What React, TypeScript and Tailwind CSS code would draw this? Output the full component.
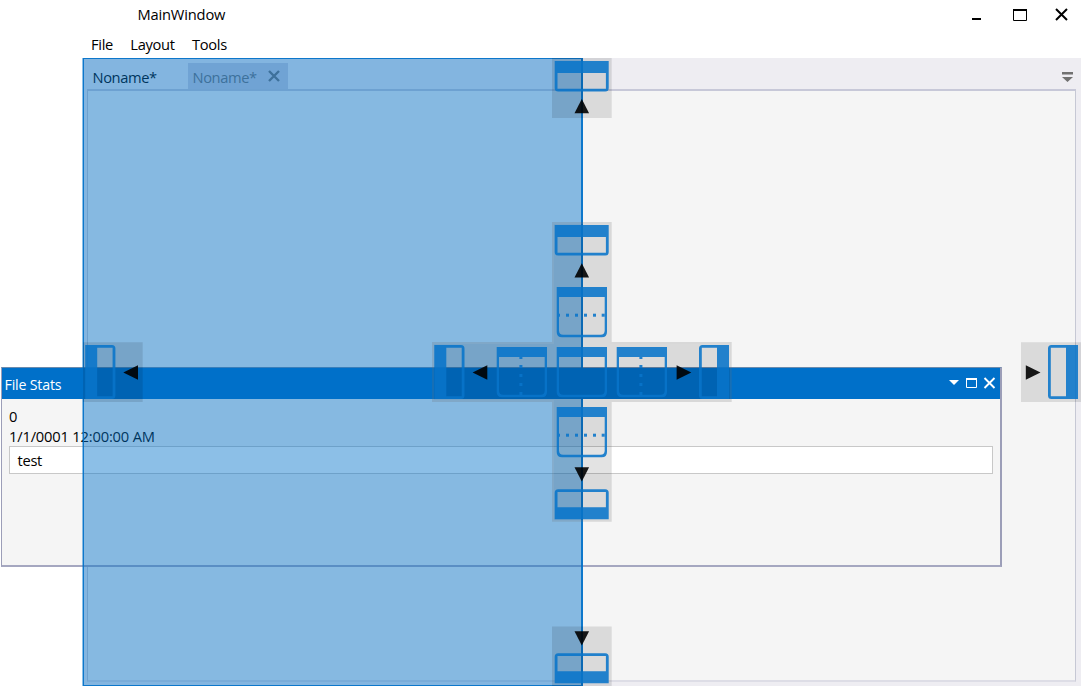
import React from "react";

const BLUE = "#0874ca";

type Side = "top" | "bottom" | "left" | "right";

function EdgeGlyph({ x, y, side }: { x: number; y: number; side: Side }) {
  const frames: Record<Side, string> = {
    top: "M0 0H54V27Q54 30.5 50.5 30.5H3.5Q0 30.5 0 27ZM2.8 12V27.7H51.2V12Z",
    bottom: "M0 30H54V3.5Q54 0 50.5 0H3.5Q0 0 0 3.5ZM2.8 18V2.8H51.2V18Z",
    left: "M0 0H26.7Q30.2 0 30.2 3.5V50.5Q30.2 54 26.7 54H0ZM12 2.8V51.2H27.4V2.8Z",
    right: "M30 0H3.5Q0 0 0 3.5V50.5Q0 54 3.5 54H30ZM18 2.8V51.2H2.8V2.8Z",
  };
  return <path transform={`translate(${x} ${y})`} d={frames[side]} fill={BLUE} fillOpacity="0.88" fillRule="evenodd" />;
}

function DocumentGlyph({ x, y, dots }: { x: number; y: number; dots?: "row" | "column" }) {
  return (
    <g transform={`translate(${x} ${y})`} fill={BLUE} fillOpacity="0.88">
      <path fillRule="evenodd" d="M0 0H50.3V45Q50.3 50.3 45 50.3H5.3Q0 50.3 0 45ZM2.3 10V43.5Q2.3 47.7 6.5 47.7H43.8Q48 47.7 48 43.5V10Z" />
      {dots === "row" && [9.3, 18.3, 27.3, 36.3, 45].map((p) => <rect key={p} x={p} y={26.7} width={3} height={3} />)}
      {dots === "row" && <rect x={2.3} y={26.7} width={1} height={3} />}
      {dots === "column" && [10, 18, 27, 36, 45].map((p) => <rect key={p} x={22.7} y={p} width={3} height={p === 10 ? 2 : 3} />)}
    </g>
  );
}

function Arrow({ x, y, side }: { x: number; y: number; side: Side }) {
  const shapes: Record<Side, string> = {
    top: "M-7.3 14.2H7.3L0 0Z",
    bottom: "M-7.3 0H7.3L0 14.2Z",
    left: "M14.7 -7.3V7.3L0 0Z",
    right: "M0 -7.3V7.3L14.7 0Z",
  };
  return <path transform={`translate(${x} ${y})`} d={shapes[side]} fill="#000" fillOpacity="0.9" />;
}

function Compass() {
  return (
    <svg className="absolute left-[432px] top-[222px]" width="300" height="300" viewBox="432 222 300 300">
      <path
        fillRule="evenodd"
        d="M552 222H611.7V342H731.7V402H611.7V521.7H552V402H432V342H552ZM554 224V344H434V400H554V519.7H609.7V400H729.7V344H609.7V224Z"
        fill="#6e6e6e"
        fillOpacity="0.21"
      />
      <path d="M554 224H609.7V344H729.7V400H609.7V519.7H554V400H434V344H554Z" fill="#000" fillOpacity="0.11" />
      <EdgeGlyph x={554.7} y={225} side="top" />
      <EdgeGlyph x={554.7} y={489.3} side="bottom" />
      <EdgeGlyph x={434.3} y={345} side="left" />
      <EdgeGlyph x={699} y={345} side="right" />
      <DocumentGlyph x={556.7} y={287} dots="row" />
      <DocumentGlyph x={496.7} y={347} dots="column" />
      <DocumentGlyph x={556.7} y={347} />
      <DocumentGlyph x={616.7} y={347} dots="column" />
      <DocumentGlyph x={556.7} y={407} dots="row" />
      <Arrow x={581.8} y={263.2} side="top" />
      <Arrow x={581.8} y={467.2} side="bottom" />
      <Arrow x={472.6} y={372.5} side="left" />
      <Arrow x={676.6} y={372.5} side="right" />
    </svg>
  );
}

function MainWindow() {
  return (
    <div className="flex h-[688px] flex-col pl-[83px]">
      <header className="flex h-[32px] items-start justify-between">
        <span className="ml-[54.5px] mt-[4px] text-[14.7px] leading-[20px] tracking-[-0.18px]">MainWindow</span>
        <svg width="110" height="24" viewBox="972 0 110 24" fill="none" stroke="#000">
          <path d="M972 19H981" strokeWidth="2" />
          <path d="M1013.5 9.5H1026.5V20.5H1013.5Z" />
          <path d="M1013 10H1027" strokeWidth="2" />
          <path d="M1056 9L1067 20M1067 9L1056 20" strokeWidth="2" />
        </svg>
      </header>
      <nav className="flex h-[26px] pl-[8px] pt-[2px] text-[14.7px] leading-[20px] tracking-[-0.3px]">
        <span className="w-[39.3px]">File</span>
        <span className="w-[61.7px]">Layout</span>
        <span>Tools</span>
      </nav>
      <main className="mr-px flex h-[628px] flex-col bg-[#eeedf2] pb-[4px] pl-[4px] pr-[5px]">
        <div className="flex h-[31px] items-end text-[14.7px] tracking-[-0.4px]">
          <div className="h-[26px] w-[100.5px] pl-[5.5px] leading-[29px]">Noname*</div>
          <div className="flex h-[26px] w-[100px] items-center justify-between bg-[#cccddc] pl-[5px] pr-[8px] leading-[29px] text-[#717176]">
            <span className="mt-[3px]">Noname*</span>
            <svg width="12" height="12" viewBox="0 0 12 12" stroke="#717176" strokeWidth="2.4">
              <path d="M1 1L11 11M11 1L1 11" />
            </svg>
          </div>
          <svg className="mb-[5px] ml-auto mr-[3px]" width="11" height="13" viewBox="0 0 11 13" fill="#717171">
            <path d="M0 1H11V3.5H0ZM0 6H11L5.5 11Z" />
          </svg>
        </div>
        <div className="flex-1 border-x border-b-2 border-t-2 border-x-[#c6c8d4] border-b-[#dddde6] border-t-[#c7c8d8] bg-[#f5f5f5]" />
      </main>
    </div>
  );
}

function FileStats() {
  return (
    <section className="absolute left-[1px] top-[367px] flex h-[200px] w-[1001px] flex-col border-b-2 border-l border-r-2 border-t border-x-[#9c9eb8] border-b-[#a5a7c0] border-t-[#6b8bad] bg-[#f5f5f5] text-[14.7px] tracking-[-0.18px]">
      <header className="flex h-[30.5px] items-center justify-between bg-[#0070c9] pl-[2.5px] pr-[4px] text-white">
        <span className="mt-[2px] text-[14.2px]">File Stats</span>
        <svg width="47" height="12" viewBox="949 377 47 12" fill="none" stroke="#fff">
          <path d="M949 380H959L954 385Z" fill="#fff" stroke="none" />
          <path d="M966.5 378.5H976.5V387.5H966.5Z" />
          <path d="M966 379H977" strokeWidth="2" />
          <path d="M984.5 378L994.5 388M994.5 378L984.5 388" strokeWidth="1.9" />
        </svg>
      </header>
      <div className="flex flex-col px-[7px] pt-[7.5px] leading-[20px]">
        <span>0</span>
        <span>1/1/0001 12:00:00 AM</span>
        <div className="flex h-[28px] items-center border border-[#c8c8c8] bg-white pl-[7.5px] tracking-[-0.3px]">test</div>
      </div>
    </section>
  );
}

export default function App() {
  return (
    <div className="relative h-[688px] w-[1082px] overflow-hidden bg-white font-['Open_Sans','Noto_Sans',sans-serif] text-black">
      <MainWindow />
      <FileStats />
      <div className="absolute left-[82px] top-[58px] h-[628px] w-[501px] bg-[#0070c9]/45">
        <div className="h-full pl-px">
          <div className="h-full border-b border-l border-r-2 border-t border-[#0070c9]/90" />
        </div>
      </div>
      <svg className="absolute left-[552px] top-[58px]" width="60" height="60" viewBox="552 58 60 60">
        <path d="M552 58H611.7V118H552Z" fill="#000" fillOpacity="0.11" />
        <EdgeGlyph x={554.7} y={61} side="top" />
        <Arrow x={581.8} y={99} side="top" />
      </svg>
      <svg className="absolute left-[552px] top-[626px]" width="60" height="60" viewBox="552 626 60 60">
        <path d="M552 626.4H611.7V686H552Z" fill="#000" fillOpacity="0.11" />
        <EdgeGlyph x={554.7} y={653.3} side="bottom" />
        <Arrow x={581.8} y={631.2} side="bottom" />
      </svg>
      <svg className="absolute left-[83px] top-[342px]" width="60" height="60" viewBox="83 342 60 60">
        <path d="M83 342.3H142.7V402H83Z" fill="#000" fillOpacity="0.11" />
        <EdgeGlyph x={85.2} y={345} side="left" />
        <Arrow x={123.3} y={372.5} side="left" />
      </svg>
      <svg className="absolute left-[1021px] top-[342px]" width="60" height="60" viewBox="1021 342 60 60">
        <path d="M1021 342.3H1081V402H1021Z" fill="#000" fillOpacity="0.11" />
        <EdgeGlyph x={1048} y={345} side="right" />
        <Arrow x={1025.8} y={372.5} side="right" />
      </svg>
      <Compass />
    </div>
  );
}
